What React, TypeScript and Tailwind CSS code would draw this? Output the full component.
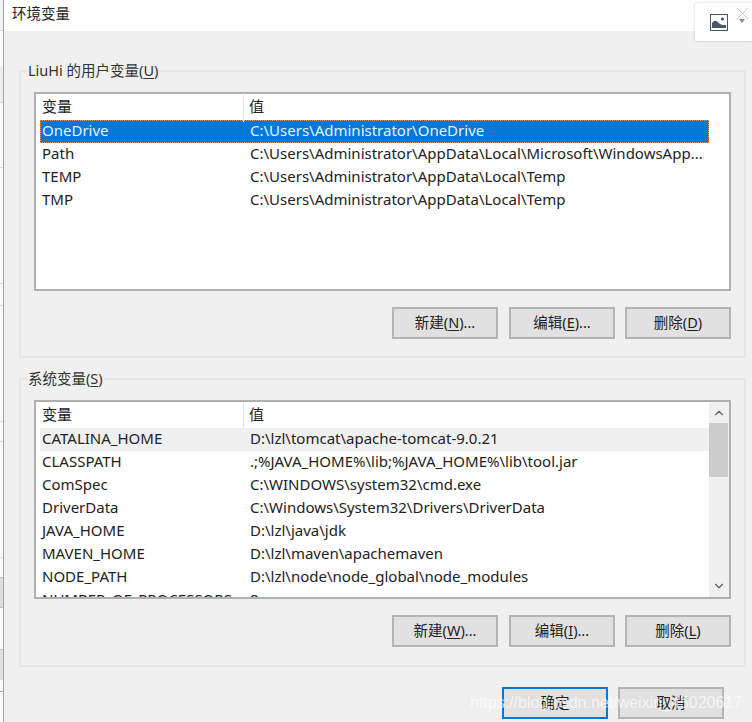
import { ChevronDown, ChevronUp } from "lucide-react";

const font = "font-['Microsoft_YaHei','Noto_Sans','Noto_Sans_CJK_SC',sans-serif]";

const userVars = [
  { name: "OneDrive", value: "C:\\Users\\Administrator\\OneDrive" },
  { name: "Path", value: "C:\\Users\\Administrator\\AppData\\Local\\Microsoft\\WindowsApp..." },
  { name: "TEMP", value: "C:\\Users\\Administrator\\AppData\\Local\\Temp" },
  { name: "TMP", value: "C:\\Users\\Administrator\\AppData\\Local\\Temp" },
];

const systemVars = [
  { name: "CATALINA_HOME", value: "D:\\lzl\\tomcat\\apache-tomcat-9.0.21" },
  { name: "CLASSPATH", value: ".;%JAVA_HOME%\\lib;%JAVA_HOME%\\lib\\tool.jar" },
  { name: "ComSpec", value: "C:\\WINDOWS\\system32\\cmd.exe" },
  { name: "DriverData", value: "C:\\Windows\\System32\\Drivers\\DriverData" },
  { name: "JAVA_HOME", value: "D:\\lzl\\java\\jdk" },
  { name: "MAVEN_HOME", value: "D:\\lzl\\maven\\apachemaven" },
  { name: "NODE_PATH", value: "D:\\lzl\\node\\node_global\\node_modules" },
  { name: "NUMBER_OF_PROCESSORS", value: "8" },
];

function Row({ name, value, tone }: { name: string; value: string; tone?: "selected" | "hover" }) {
  const bg =
    tone === "selected"
      ? "bg-[#0078d7] text-[#e8f2fb] outline-1 -outline-offset-1 outline-dotted outline-[#c8a080]"
      : tone === "hover"
        ? "bg-[#f0f0f0]"
        : "";
  return (
    <div className={`flex h-[23px] shrink-0 items-center whitespace-nowrap pb-[3px] leading-none ${bg}`}>
      <div className="w-[204px] shrink-0 pl-[2px]">{name}</div>
      <div className="pl-[6px]">{value}</div>
    </div>
  );
}

function Header() {
  return (
    <div className="flex h-[26px] shrink-0 items-center">
      <div className="w-[204px] shrink-0 border-r border-[#e5e5e5] pb-[3px] pl-[2px] leading-[26px]">变量</div>
      <div className="pb-[3px] pl-[5px] leading-[26px]">值</div>
    </div>
  );
}

function Shortcut({ label, k, suffix }: { label: string; k: string; suffix?: string }) {
  return (
    <>
      {label}(<span className="underline underline-offset-2">{k}</span>){suffix}
    </>
  );
}

function Button({ children, primary, className = "" }: { children: React.ReactNode; primary?: boolean; className?: string }) {
  return (
    <button
      className={`flex h-[32px] w-[106px] items-center justify-center bg-[#e1e1e1] text-[14.5px] text-[#222] ${
        primary ? "border-2 border-[#0078d7]" : "border-2 border-[#b4b4b4]"
      } ${className}`}
    >
      {children}
    </button>
  );
}

function Group({ title, children, className }: { title: React.ReactNode; children: React.ReactNode; className: string }) {
  return (
    <section className={`relative ml-[19px] w-[727px] border-2 border-[#e6e6e6] px-[13px] ${className}`}>
      <h2 className="absolute top-[-12px] left-[6px] bg-[#f0f0f0] px-[1px] text-[14.5px] leading-[20px] font-normal text-[#333]">
        {title}
      </h2>
      {children}
    </section>
  );
}

// bits of the window lying behind the dialog, down the left edge
function BehindStrip() {
  return (
    <div className="flex w-[3px] shrink-0 flex-col bg-[#fafafa]">
      <div className="h-[31px] shrink-0 border-b border-[#d4d4d4] bg-[#f4f4f4]" />
      <div className="mt-[36px] h-[36px] shrink-0 border-b border-[#d4d4d4] bg-[#efefef]" />
      <div className="mt-[64px] h-px shrink-0 bg-[#dcdcdc]" />
      <div className="mt-[115px] h-px shrink-0 bg-[#dcdcdc]" />
      <div className="mt-[21px] h-px shrink-0 bg-[#dcdcdc]" />
      <div className="mt-[115px] h-px shrink-0 bg-[#dcdcdc]" />
      <div className="mt-[19px] h-px shrink-0 bg-[#dcdcdc]" />
      <div className="mt-[115px] h-px shrink-0 bg-[#e4e4e4]" />
      <div className="mt-[19px] h-[31px] shrink-0 border-y border-[#c4c4c4] bg-[#dedede]" />
      <div className="mt-[41px] h-[31px] shrink-0 border-t border-[#c4c4c4] bg-[#e0e0e0]" />
      <div className="mt-[11px] h-px shrink-0 bg-[#a8a8a8]" />
    </div>
  );
}

export default function App() {
  return (
    <div className={`relative h-[722px] w-[752px] overflow-hidden bg-white text-[15px] text-[#222] ${font}`}>
      <div className="flex h-full">
        <BehindStrip />
        <div className="flex min-w-0 flex-1 flex-col border-l-[1px] border-[#a3a3a3]">
          <div className="flex h-[31px] shrink-0 items-center bg-white pb-[4px] pl-[8px] text-[14.5px] leading-none text-[#222]">
            环境变量
          </div>
          <main className="flex-1 bg-[#f0f0f0] pt-[39px]">
            <div className="-ml-[4px]">
              <Group className="h-[288px]" title={<>LiuHi 的用户变量(<span className="underline underline-offset-2">U</span>)</>}>
                <div className="mt-[20px] h-[199px] border-2 border-[#b0b0b4] bg-white pr-[20px] pl-[4px]">
                  <Header />
                  {userVars.map((row, i) => (
                    <Row key={row.name} {...row} tone={i === 0 ? "selected" : undefined} />
                  ))}
                </div>
                <div className="mt-[16px] flex justify-end gap-[10px]">
                  <Button className="mr-px"><Shortcut label="新建" k="N" suffix="..." /></Button>
                  <Button><Shortcut label="编辑" k="E" suffix="..." /></Button>
                  <Button><Shortcut label="删除" k="D" /></Button>
                </div>
              </Group>
              <Group className="mt-[20px] h-[289px]" title={<>系统变量(<span className="underline underline-offset-2">S</span>)</>}>
                <div className="mt-[20px] flex h-[199px] overflow-hidden border-2 border-[#b0b0b4] bg-white pl-[4px]">
                  <div className="flex min-w-0 flex-1 flex-col">
                    <Header />
                    {systemVars.map((row, i) => (
                      <Row key={row.name} {...row} tone={i === 0 ? "hover" : undefined} />
                    ))}
                  </div>
                  <div className="flex w-[20px] shrink-0 flex-col items-center bg-[#f0f0f0] pr-[1px] text-[#606060]">
                    <ChevronUp size={14} strokeWidth={2} className="mt-[4px]" />
                    <div className="mt-[3px] h-[54px] w-full bg-[#cdcdcd]" />
                    <ChevronDown size={14} strokeWidth={2} className="mt-auto mb-[4px]" />
                  </div>
                </div>
                <div className="mt-[16px] flex justify-end gap-[10px]">
                  <Button className="mr-px"><Shortcut label="新建" k="W" suffix="..." /></Button>
                  <Button><Shortcut label="编辑" k="I" suffix="..." /></Button>
                  <Button><Shortcut label="删除" k="L" /></Button>
                </div>
              </Group>
              <div className="mt-[20px] flex justify-end gap-[10px] pr-[28px]">
                <Button primary>确定</Button>
                <Button>取消</Button>
              </div>
            </div>
          </main>
        </div>
      </div>

      {/* floating image toolbar */}
      <div className="absolute top-[3px] left-[695px] flex h-[38px] w-[60px] items-start rounded-[2px] bg-white shadow-[0_0_3px_rgba(0,0,0,0.2)]">
        <svg width="18" height="17" viewBox="0 0 18 17" className="mt-[11px] ml-[15px]">
          <rect x="0.5" y="0.5" width="17" height="16" fill="#fff" stroke="#4a5568" />
          <path d="M2 14V9c2-2 3-3 5-1.5L10 10c1.5 1 3 1 6 1v3z" fill="#4a5568" />
          <circle cx="12.5" cy="5" r="1.6" fill="#4a5568" />
        </svg>
        <div className="relative ml-[8px] h-[24px] w-[14px]">
          <svg width="13" height="13" viewBox="0 0 13 13" className="absolute top-[4px] left-0">
            <path d="M1 1l11 11M12 1L1 12" stroke="#c8c8c8" strokeWidth="1" />
          </svg>
          <div className="absolute top-[16px] left-[3px] h-0 w-0 border-x-[3px] border-t-[4px] border-x-transparent border-t-[#8a8f98]" />
        </div>
      </div>

      {/* watermark */}
      <div className="absolute top-[691px] left-[470px] font-['Liberation_Sans',sans-serif] text-[16px] whitespace-nowrap text-white/70">
        https://blog.csdn.net/weixin_45020617
      </div>
    </div>
  );
}
